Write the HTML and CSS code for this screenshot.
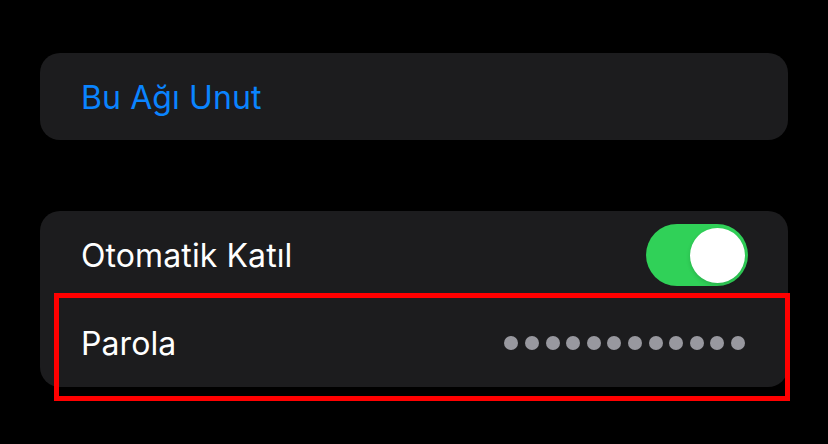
FILE: index.html
```html
<!DOCTYPE html>
<html lang="tr">
<head>
<meta charset="utf-8">
<title>Ağ Ayarları</title>
<link rel="stylesheet" href="styles.css">
</head>
<body>
<main class="page">
  <section class="card">
    <div class="row">
      <span class="label link">Bu Ağı Unut</span>
    </div>
  </section>
  <section class="card">
    <div class="row">
      <span class="label">Otomatik Katıl</span>
      <span class="toggle on"><span class="knob"></span></span>
    </div>
    <div class="row highlighted">
      <span class="label">Parola</span>
      <span class="dots">
        <i></i><i></i><i></i><i></i><i></i><i></i><i></i><i></i><i></i><i></i><i></i><i></i>
      </span>
      <span class="focus-box"></span>
    </div>
  </section>
</main>
</body>
</html>
```

FILE: styles.css
```css
html, body {
  margin: 0;
  padding: 0;
  background: #000;
}
body {
  width: 828px;
  height: 444px;
  overflow: hidden;
  font-family: "Inter", "Liberation Sans", sans-serif;
}
.page {
  padding: 53px 40px 0 40px;
  display: flex;
  flex-direction: column;
  gap: 71px;
}
.card {
  background: #1c1c1e;
  border-radius: 20px;
  display: flex;
  flex-direction: column;
}
.row {
  height: 88px;
  display: flex;
  align-items: center;
  justify-content: space-between;
  padding: 0 40px 0 41px;
  box-sizing: border-box;
  position: relative;
}
.card > .row:first-child:last-child { height: 87px; }
.label {
  color: #fff;
  font-size: 32px;
  letter-spacing: 0.1px;
  line-height: 1;
  position: relative;
  top: 1px;
}
.link { color: #0a84ff; }
.toggle {
  width: 102px;
  height: 62px;
  border-radius: 31px;
  background: #30d158;
  display: flex;
  align-items: center;
  justify-content: flex-end;
  padding: 0 3px;
  box-sizing: border-box;
}
.knob {
  width: 55px;
  height: 55px;
  border-radius: 50%;
  background: #fff;
  box-shadow: 0 2px 4px rgba(0,0,0,0.15);
}
.dots {
  display: flex;
  gap: 6.6px;
  margin-right: 3px;
}
.dots i {
  width: 14px;
  height: 14px;
  border-radius: 50%;
  background: #98989f;
}
.focus-box {
  position: absolute;
  top: -6px;
  left: 14px;
  right: -2px;
  bottom: -14px;
  border: 5px solid #ff0000;
  pointer-events: none;
}
```
